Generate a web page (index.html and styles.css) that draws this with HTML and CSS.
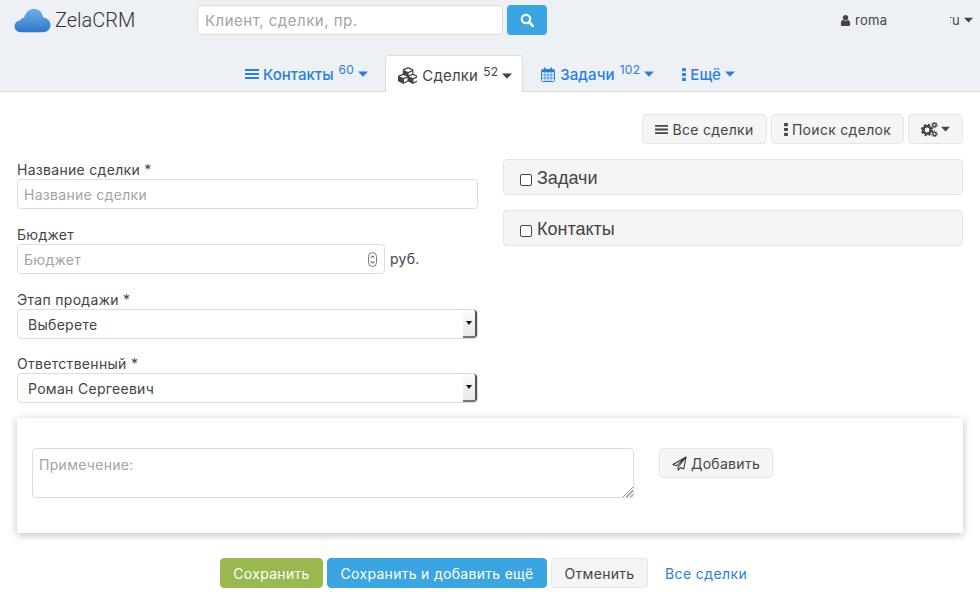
FILE: index.html
```html
<!DOCTYPE html>
<html lang="ru">
<head>
<meta charset="utf-8">
<title>ZelaCRM</title>
<link rel="stylesheet" href="styles.css">
</head>
<body>
<svg class="defs" width="0" height="0">
  <defs>
    <symbol id="i-bars" viewBox="0 0 14 12"><path d="M0 1h14v2H0zM0 5h14v2H0zM0 9h14v2H0z"/></symbol>
    <symbol id="i-dots" viewBox="0 0 4 14"><path d="M0 0h4v3.4H0zM0 5.3h4v3.4H0zM0 10.6h4V14H0z"/></symbol>
    <symbol id="i-user" viewBox="0 0 1792 1792"><path d="M1536 1399q0 109-62.500 187t-150.500 78h-854q-88 0-150.500-78t-62.500-187q0-85 8.500-160.500t31.500-152 58.500-131 94-89 134.500-34.500q131 128 313 128t313-128q76 0 134.500 34.500t94 89 58.500 131 31.500 152 8.500 160.500zm-256-887q0 159-112.500 271.500t-271.500 112.500-271.500-112.500-112.500-271.500 112.500-271.500 271.500-112.500 271.500 112.500 112.500 271.500z"/></symbol>
    <symbol id="i-caret" viewBox="0 0 10 6"><path d="M0 .5h10L5 5.800z"/></symbol>
  </defs>
</svg>

<header class="top">
  <div class="top-row">
    <a class="logo">
      <svg class="logo-cloud" viewBox="0 0 38 25">
        <defs><linearGradient id="cloud" x1="0" y1="0" x2="0" y2="1"><stop offset="0" stop-color="#6fb0ea"/><stop offset="1" stop-color="#2f78c8"/></linearGradient></defs>
        <path fill="url(#cloud)" d="M7 24.500C3 24.500.5 21.800.5 18.500c0-3.300 2.500-5.800 5.800-6.100C7 10.700 8.500 9.800 10.200 10 11.800 4.300 15.800.5 20.500.5c4.900 0 8.700 3.700 9.500 9 4.400.3 7.500 3.700 7.500 7.700 0 4-3 7.300-7.500 7.300z"/>
      </svg>
      <span class="logo-text">ZelaCRM</span>
    </a>
    <form class="search">
      <input class="search-input" type="text" placeholder="Клиент, сделки, пр.">
      <button class="search-btn" type="button">
        <svg width="14" height="14" viewBox="0 0 14 14"><circle cx="6" cy="6" r="4.200" fill="none" stroke="#fff" stroke-width="2.200"/><path d="M9 9l3.800 3.800" stroke="#fff" stroke-width="2.600" stroke-linecap="round"/></svg>
      </button>
    </form>
    <div class="user"><svg class="ic-user"><use href="#i-user"/></svg>roma</div>
    <div class="lang"><span class="lang-clip"><span>ru</span></span><svg class="caret"><use href="#i-caret"/></svg></div>
  </div>
  <nav class="tabs">
    <a class="tab tab-contacts"><svg class="ic-bars"><use href="#i-bars"/></svg><span>Контакты</span><sup>60</sup><svg class="caret"><use href="#i-caret"/></svg></a>
    <a class="tab tab-active">
      <svg class="ic-cubes" viewBox="0 0 2048 1792"><path d="M640 1632l384-192v-314l-384 164v342zm-64-454l404-173-404-173-404 173zm1088 454l384-192v-314l-384 164v342zm-64-454l404-173-404-173-404 173zm-448-293l384-165v-266l-384 164v267zm-64-379l441-189-441-189-441 189zm1088 518v416q0 36-19 67t-52 47l-448 224q-25 14-57 14t-57-14l-448-224q-4-2-7-4-2 2-7 4l-448 224q-25 14-57 14t-57-14l-448-224q-33-16-52-47t-19-67v-416q0-38 21.500-70t56.500-48l434-186v-400q0-38 21.500-70t56.500-48l448-192q23-10 50-10t50 10l448 192q35 16 56.500 48t21.500 70v400l434 186q36 16 57 48t21 70z"/></svg>
      <span>Сделки</span><sup>52</sup><svg class="caret"><use href="#i-caret"/></svg></a>
    <a class="tab tab-tasks">
      <svg class="ic-cal" viewBox="0 0 14 15"><rect x=".5" y="2.500" width="13" height="12" rx="1" fill="none" stroke="#2a7fdb"/><path fill="#2a7fdb" d="M1 3h12v2.200H1zM3 .5h1.600v3H3zM9.400 .5H11v3H9.400z"/><path fill="none" stroke="#2a7fdb" stroke-width=".7" d="M1 8h12M1 11h12M4 5v9M7 5v9M10 5v9"/></svg>
      <span>Задачи</span><sup>102</sup><svg class="caret"><use href="#i-caret"/></svg></a>
    <a class="tab tab-more"><svg class="ic-dots"><use href="#i-dots"/></svg><span>Ещё</span><svg class="caret"><use href="#i-caret"/></svg></a>
  </nav>
</header>

<main class="page">
  <div class="toolbar">
    <button class="btn btn-all" type="button"><svg class="ic-bars"><use href="#i-bars"/></svg>Все сделки</button>
    <button class="btn btn-find" type="button"><svg class="ic-dots"><use href="#i-dots"/></svg>Поиск сделок</button>
    <button class="btn btn-gear" type="button">
      <svg class="ic-gears" viewBox="0 0 17 15"><circle cx="6" cy="8" r="3.700" fill="none" stroke="#444" stroke-width="2.600"/><circle cx="6" cy="8" r="5.300" fill="none" stroke="#444" stroke-width="1.800" stroke-dasharray="2.200 2"/><circle cx="13.500" cy="3" r="1.700" fill="none" stroke="#444" stroke-width="1.400"/><circle cx="13.500" cy="3" r="2.900" fill="none" stroke="#444" stroke-width="1" stroke-dasharray="1.300 1.200"/><circle cx="13.500" cy="12" r="1.700" fill="none" stroke="#444" stroke-width="1.400"/><circle cx="13.500" cy="12" r="2.900" fill="none" stroke="#444" stroke-width="1" stroke-dasharray="1.300 1.200"/></svg>
      <svg class="caret"><use href="#i-caret"/></svg>
    </button>
  </div>

  <div class="columns">
    <div class="col-left">
      <div class="field">
        <label class="label">Название сделки *</label>
        <input class="control" type="text" placeholder="Название сделки">
      </div>
      <div class="field">
        <label class="label">Бюджет</label>
        <div class="budget-row">
          <div class="control budget">
            <input class="budget-input" type="text" placeholder="Бюджет">
            <svg class="spin" viewBox="0 0 9 15"><rect x=".5" y=".5" width="8" height="14" rx="4" fill="#fff" stroke="#777"/><path d="M2.800 5.800l1.700-2 1.700 2M2.800 9.200l1.700 2 1.700-2" fill="none" stroke="#333"/></svg>
          </div>
          <span class="unit">руб.</span>
        </div>
      </div>
      <div class="field">
        <label class="label">Этап продажи *</label>
        <div class="control select"><span class="select-value">Выберете</span><span class="select-arrow"></span></div>
      </div>
      <div class="field">
        <label class="label">Ответственный *</label>
        <div class="control select"><span class="select-value">Роман Сергеевич</span><span class="select-arrow"></span></div>
      </div>
    </div>
    <div class="col-right">
      <div class="panel"><input class="check" type="checkbox"><span>Задачи</span></div>
      <div class="panel"><input class="check" type="checkbox"><span>Контакты</span></div>
    </div>
  </div>

  <section class="note">
    <textarea class="note-text" placeholder="Примечение:"></textarea>
    <button class="btn btn-add" type="button">
      <svg class="ic-plane" viewBox="0 0 16 16"><path d="M15 1L1 9l3.800 1.500L15 1 6.500 11.700v3.500l2.300-2.900 3.700 1.500z" fill="none" stroke="#333" stroke-width="1.100" stroke-linejoin="round"/></svg>
      Добавить</button>
  </section>

  <div class="actions">
    <button class="btn btn-save" type="button">Сохранить</button>
    <button class="btn btn-save-more" type="button">Сохранить и добавить ещё</button>
    <button class="btn btn-cancel" type="button">Отменить</button>
    <a class="link-all">Все сделки</a>
  </div>
</main>
</body>
</html>
```

FILE: styles.css
```css
* { box-sizing: border-box; }
html, body { margin: 0; padding: 0; }
body { font-family: Inter, "Liberation Sans", sans-serif; font-size: 14px; letter-spacing: .3px; color: #444; background: #fff; height: 608px; overflow: hidden; }
.defs { display: block; height: 0; }
svg { fill: currentColor; flex: none; }
input, textarea, button { font: inherit; letter-spacing: inherit; }
input::placeholder, textarea::placeholder { color: #a3a3a3; opacity: 1; }

.top { height: 92px; background: #edf0f4; border-bottom: 1px solid #dddddd; display: flex; flex-direction: column; }
.top-row { display: flex; align-items: flex-start; height: 55px; padding: 5px 0 0 14px; }
.logo { display: flex; align-items: center; width: 183px; height: 30px; color: #333; }
.logo-cloud { width: 37px; height: 25px; }
.logo-text { font-family: Roboto, "Liberation Sans", sans-serif; font-weight: 300; font-size: 20px; margin-left: 4px; letter-spacing: 0; }
.search { display: flex; gap: 4px; width: 350px; }
.search-input { width: 306px; height: 30px; padding: 0 7px; background: #fff; border: 1px solid #dddddd; border-radius: 4px; color: #444; outline: none; font-size: 15px; letter-spacing: .5px; }
.search-btn { width: 40px; height: 30px; border: 0; border-radius: 4px; background: #3aa5e0; display: flex; align-items: center; justify-content: center; padding: 0; }
.user { margin-left: 292px; width: 111px; height: 30px; display: flex; align-items: center; font-size: 13px; color: #444; }
.ic-user { width: 13px; height: 13px; margin-right: 3px; }
.lang { display: flex; align-items: center; height: 30px; font-size: 13px; }
.lang-clip { display: block; width: 10px; overflow: hidden; direction: rtl; }
.lang .caret { margin-left: 4px; }
.caret { width: 9px; height: 6px; }

.tabs { display: flex; align-items: flex-end; height: 37px; padding-left: 231px; }
.tab { display: flex; align-items: center; height: 37px; padding: 3px 14px 0; color: #2a7fdb; font-weight: 500; font-size: 15px; letter-spacing: 0; }
.tab sup { font-size: 12px; font-weight: 400; line-height: 1; margin: 0 0 8px 5px; letter-spacing: .3px; }
.tab .caret { margin-left: 4px; width: 10px; }
.tab .ic-bars { width: 14px; height: 12px; margin-right: 4px; }
.tab-contacts { margin-right: 3px; }
.tab-active { width: 138px; background: #fff; color: #444; font-weight: 400; border: 1px solid #dddddd; border-bottom: 0; border-radius: 4px 4px 0 0; margin-bottom: -1px; height: 37px; padding-left: 12px; letter-spacing: .2px; }
.ic-cubes { width: 19px; height: 17px; margin-right: 5px; }
.ic-cal { width: 14px; height: 15px; margin-right: 5px; }
.tab-tasks { margin-left: 4px; letter-spacing: .1px; }
.tab-more { padding-left: 14px; }
.tab-more .caret { margin-left: 4px; }
.ic-dots { width: 4px; height: 13px; margin-right: 4px; }

.page { padding: 22px 17px 0; }
.toolbar { display: flex; justify-content: flex-end; gap: 4px; height: 30px; }
.btn { height: 30px; display: inline-flex; align-items: center; justify-content: center; background: #f5f5f5; border: 1px solid #e6e6e6; border-radius: 4px; color: #444; padding: 0; }
.btn-all { width: 125px; }
.btn-all .ic-bars { width: 13px; height: 11px; margin-right: 4px; }
.btn-find { width: 133px; }
.btn-find .ic-dots { margin-right: 4px; }
.btn-gear { width: 55px; gap: 3px; }
.ic-gears { width: 17px; height: 15px; }

.columns { display: flex; gap: 25px; margin-top: 15px; }
.col-left { width: 461px; }
.col-right { width: 460px; }
.field { margin-bottom: 15px; }
.field:nth-child(3) { margin-bottom: 14px; }
.field:last-child { margin-bottom: 0; }
.label { display: block; height: 20px; padding-top: 2px; line-height: 18px; }
.control { display: flex; align-items: center; width: 100%; height: 30px; background: #fff; border: 1px solid #dddddd; border-radius: 4px; padding: 0 6px; color: #444; outline: none; }
.budget-row { display: flex; align-items: center; gap: 5px; }
.budget { width: 368px; padding-right: 7px; }
.budget-input { flex: 1; min-width: 0; border: 0; padding: 0; outline: none; background: transparent; color: #444; }
.spin { width: 9px; height: 15px; fill: none; }
.unit { margin-bottom: 2px; }
.select { padding: 0 0 0 10px; justify-content: space-between; overflow: hidden; }
.select-value { flex: 1; }
.select-arrow { width: 14px; height: 28px; background: linear-gradient(#fbfbfb, #e8e8e8); border-right: 2px solid #555; border-bottom: 2px solid #777; border-radius: 0 3px 3px 0; display: flex; align-items: center; justify-content: center; }
.select-arrow::before { content: ""; border-left: 3px solid transparent; border-right: 3px solid transparent; border-top: 4px solid #111; }

.panel { display: flex; align-items: center; height: 36px; background: #f5f5f5; border: 1px solid #e3e3e3; border-radius: 4px; padding: 2px 0 0 16px; margin-bottom: 15px; font-size: 18px; letter-spacing: 0; color: #444; font-family: "Liberation Sans", sans-serif; }
.check { appearance: none; width: 12px; height: 12px; margin: 4px 5px 0 0; background: #fff; border: 1px solid #444; border-radius: 2px; }

.note { display: flex; align-items: flex-start; gap: 25px; height: 115px; margin-top: 15px; padding: 30px 15px; background: #fff; box-shadow: 0 2px 8px rgba(0,0,0,.25); }
.note-text { width: 602px; height: 50px; resize: none; padding: 7px 6px; border: 1px solid #dddddd; border-radius: 4px; color: #444; outline: none; display: block; background: #fff linear-gradient(135deg, transparent 50%, #999 50%, #999 58%, transparent 58%, transparent 68%, #999 68%, #999 76%, transparent 76%, transparent 86%, #999 86%) no-repeat right bottom / 11px 11px; }
.btn-add { width: 114px; }
.ic-plane { width: 15px; height: 15px; margin-right: 4px; fill: none; }

.actions { display: flex; align-items: center; gap: 4px; margin-top: 25px; padding-left: 203px; }
.btn-save { width: 103px; background: #9ab84f; border-color: #9ab84f; color: #fff; }
.btn-save-more { width: 220px; background: #3aa5e0; border-color: #3aa5e0; color: #fff; }
.btn-cancel { width: 97px; }
.link-all { margin-left: 13px; color: #2a7fdb; letter-spacing: .4px; }
```
